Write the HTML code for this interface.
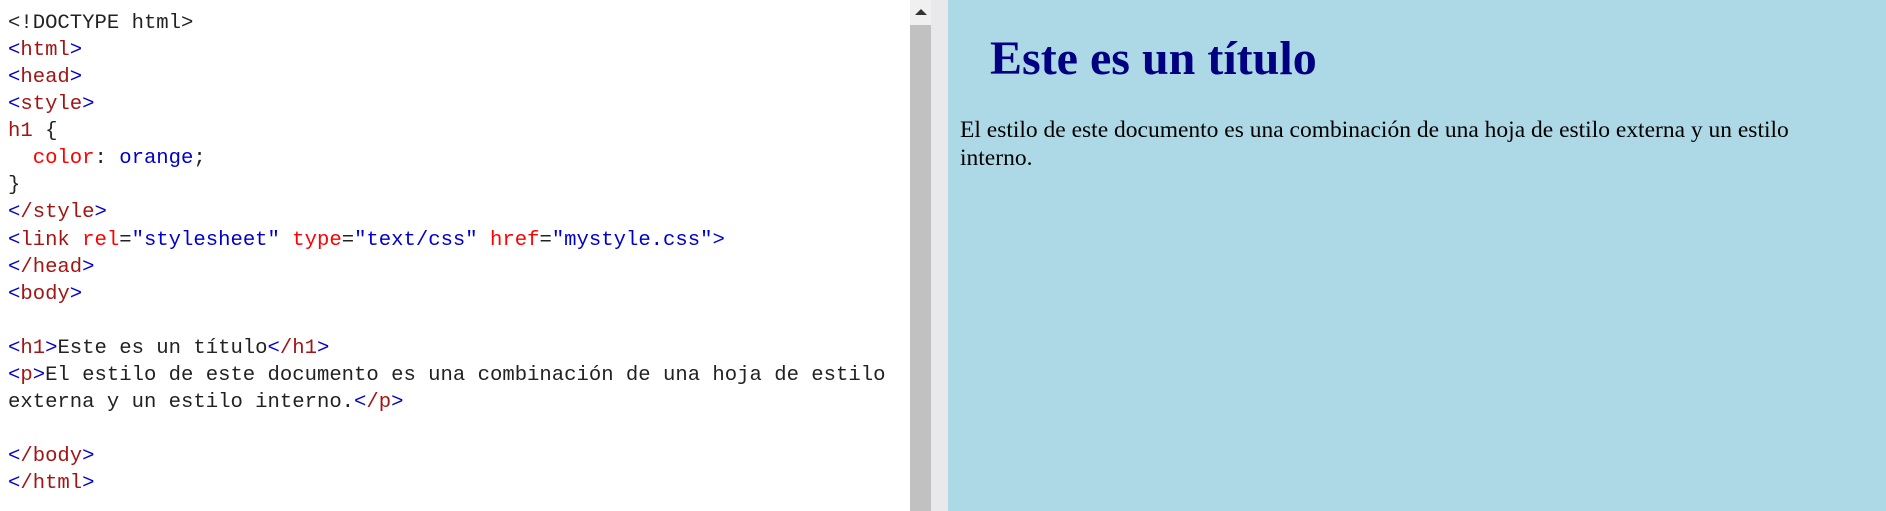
<!DOCTYPE html>
<html><head><style>
body{margin:0;width:1886px;height:511px;overflow:hidden;background:#fff;position:relative}
#code{position:absolute;left:8px;top:10px;font-family:"Liberation Mono",monospace;font-size:20.6px;line-height:27.06px;white-space:pre;color:#222}
.b{color:#0000cd}.r{color:#a31515}.a{color:#f00}.v{color:#0000cd}
#sb{position:absolute;left:910px;top:0;width:21px;height:511px;background:#f0f0f0}
#th{position:absolute;left:910px;top:25px;width:21px;height:486px;background:#c1c1c1}
#ar{position:absolute;left:915px;top:9px;width:0;height:0;border-left:6px solid transparent;border-right:6px solid transparent;border-bottom:6px solid #333}
#gap{position:absolute;left:931px;top:0;width:17px;height:511px;background:#e9e9ec}
#pv{position:absolute;left:948px;top:0;width:938px;height:511px;background:#add8e6;font-family:"Liberation Serif",serif}
h1{position:absolute;left:42px;top:31px;margin:0;font-size:48px;color:#000080;font-weight:bold}
p{position:absolute;left:12px;top:117px;margin:0;font-size:23.5px;line-height:27.7px;color:#000;width:852px}
</style></head><body>
<div id="code">&lt;!DOCTYPE html&gt;
<span class="b">&lt;</span><span class="r">html</span><span class="b">&gt;</span>
<span class="b">&lt;</span><span class="r">head</span><span class="b">&gt;</span>
<span class="b">&lt;</span><span class="r">style</span><span class="b">&gt;</span>
<span class="r">h1</span> {
  <span class="a">color</span>: <span class="v">orange</span>;
}
<span class="b">&lt;</span><span class="r">/style</span><span class="b">&gt;</span>
<span class="b">&lt;</span><span class="r">link</span> <span class="a">rel</span>=<span class="v">"stylesheet"</span> <span class="a">type</span>=<span class="v">"text/css"</span> <span class="a">href</span>=<span class="v">"mystyle.css"</span><span class="b">&gt;</span>
<span class="b">&lt;</span><span class="r">/head</span><span class="b">&gt;</span>
<span class="b">&lt;</span><span class="r">body</span><span class="b">&gt;</span>

<span class="b">&lt;</span><span class="r">h1</span><span class="b">&gt;</span>Este es un título<span class="b">&lt;</span><span class="r">/h1</span><span class="b">&gt;</span>
<span class="b">&lt;</span><span class="r">p</span><span class="b">&gt;</span>El estilo de este documento es una combinación de una hoja de estilo
externa y un estilo interno.<span class="b">&lt;</span><span class="r">/p</span><span class="b">&gt;</span>

<span class="b">&lt;</span><span class="r">/body</span><span class="b">&gt;</span>
<span class="b">&lt;</span><span class="r">/html</span><span class="b">&gt;</span></div>
<div id="sb"></div><div id="th"></div><div id="ar"></div><div id="gap"></div>
<div id="pv"><h1>Este es un título</h1><p>El estilo de este documento es una combinación de una hoja de estilo externa y un estilo interno.</p></div>
</body></html>
